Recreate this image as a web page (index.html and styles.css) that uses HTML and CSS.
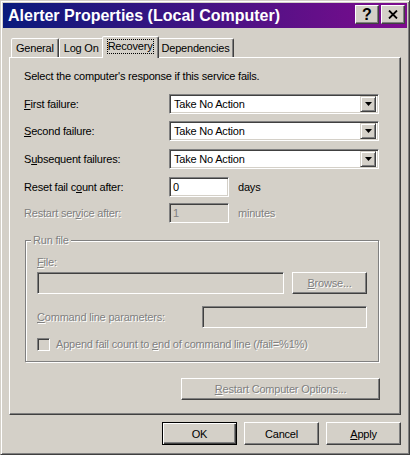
FILE: index.html
```html
<!DOCTYPE html>
<html lang="en">
<head>
  <meta charset="UTF-8">
  <title>Alerter Properties (Local Computer)</title>
  <link rel="stylesheet" href="styles.css">
</head>
<body>
  <div class="window">
    <div class="titlebar">
      <span class="title">Alerter Properties (Local Computer)</span>
      <div class="caption-buttons">
        <button class="cap-btn help">?</button>
        <button class="cap-btn close">
          <svg width="10" height="9" viewBox="0 0 10 9"><path d="M1 0.5 L9 8.5 M9 0.5 L1 8.5" stroke="#000" stroke-width="1.8" fill="none"/></svg>
        </button>
      </div>
    </div>

    <div class="body">
      <div class="tabs">
        <div class="tab">General</div>
        <div class="tab">Log On</div>
        <div class="tab active"><span class="focus">Recovery</span></div>
        <div class="tab">Dependencies</div>
      </div>

      <div class="panel">
        <div class="intro">Select the computer's response if this service fails.</div>

        <div class="row first">
          <label class="row-label"><u>F</u>irst failure:</label>
          <div class="combo"><span class="combo-text">Take No Action</span><span class="combo-arrow"><svg width="7" height="4" viewBox="0 0 7 4"><path d="M0 0 H7 L3.5 4 Z" fill="#000"/></svg></span></div>
        </div>
        <div class="row second">
          <label class="row-label"><u>S</u>econd failure:</label>
          <div class="combo"><span class="combo-text">Take No Action</span><span class="combo-arrow"><svg width="7" height="4" viewBox="0 0 7 4"><path d="M0 0 H7 L3.5 4 Z" fill="#000"/></svg></span></div>
        </div>
        <div class="row">
          <label class="row-label">S<u>u</u>bsequent failures:</label>
          <div class="combo"><span class="combo-text">Take No Action</span><span class="combo-arrow"><svg width="7" height="4" viewBox="0 0 7 4"><path d="M0 0 H7 L3.5 4 Z" fill="#000"/></svg></span></div>
        </div>
        <div class="row">
          <label class="row-label">Reset fail c<u>o</u>unt after:</label>
          <div class="textbox small">0</div>
          <span class="unit">days</span>
        </div>
        <div class="row last disabled">
          <label class="row-label">Restart ser<u>v</u>ice after:</label>
          <div class="textbox small off">1</div>
          <span class="unit">minutes</span>
        </div>

        <div class="group disabled">
          <span class="legend">Run file</span>
          <div class="field-label"><u>F</u>ile:</div>
          <div class="file-row">
            <div class="textbox file off"></div>
            <button class="btn browse"><u>B</u>rowse...</button>
          </div>
          <div class="cmd-row">
            <span><u>C</u>ommand line parameters:</span>
            <div class="textbox cmd off"></div>
          </div>
          <div class="check-row">
            <span class="checkbox"></span>
            <span>Append fail count to <u>e</u>nd of command line (/fail=%1%)</span>
          </div>
        </div>

        <button class="btn restart disabled"><u>R</u>estart Computer Options...</button>
      </div>

      <div class="actions">
        <button class="btn default">OK</button>
        <button class="btn">Cancel</button>
        <button class="btn"><u>A</u>pply</button>
      </div>
    </div>
  </div>
</body>
</html>
```

FILE: styles.css
```css
* {
  box-sizing: border-box;
}
body {
  margin: 0;
  background: #d4d0c8;
  font-family: "Liberation Sans", Arial, sans-serif;
  font-size: 11px;
  letter-spacing: -0.2px;
  color: #000;
}
u {
  text-decoration: underline;
  text-underline-offset: 1px;
}
.window {
  width: 410px;
  height: 455px;
  background: #d4d0c8;
  border: 1px solid;
  border-color: #d4d0c8 #404040 #404040 #d4d0c8;
  box-shadow: inset 1px 1px #fff, inset -1px -1px #808080;
  padding: 2px;
  display: flex;
  flex-direction: column;
}

/* title bar */
.titlebar {
  height: 25px;
  display: flex;
  align-items: flex-start;
  justify-content: space-between;
  padding: 0 2px 0 5px;
  background: linear-gradient(to right, #0a1a7c, #4a1284 55%, #7e0c8e);
}
.title {
  color: #fff;
  font-weight: bold;
  font-size: 16px;
  letter-spacing: 0;
  line-height: 25px;
}
.caption-buttons {
  display: flex;
  gap: 2px;
  margin-top: 2px;
}
.cap-btn {
  width: 24px;
  height: 19px;
  padding: 0;
  background: #d4d0c8;
  border: 1px solid;
  border-color: #fff #404040 #404040 #fff;
  box-shadow: inset -1px -1px #808080;
  display: flex;
  align-items: center;
  justify-content: center;
  font-family: "Liberation Sans", Arial, sans-serif;
  font-weight: bold;
  font-size: 16px;
  color: #000;
}

/* tabs */
.body {
  flex: 1;
  padding: 0 6px;
  display: flex;
  flex-direction: column;
}
.tabs {
  display: flex;
  align-items: flex-end;
  height: 21px;
  margin-top: 8px;
  padding-left: 2px;
}
.tab {
  height: 19px;
  padding: 0 4px;
  display: flex;
  align-items: center;
  border: 1px solid;
  border-bottom: none;
  border-color: #fff #404040 transparent #fff;
  box-shadow: inset -1px 0 #808080;
  border-radius: 2px 2px 0 0;
  background: #d4d0c8;
}
.tab.active {
  height: 22px;
  margin: 0 -2px -1px;
  padding: 0 5px 3px;
  position: relative;
  z-index: 1;
}
.focus {
  outline: 1px dotted #000;
  outline-offset: 0;
  line-height: 13px;
}

/* property page */
.panel {
  width: 392px;
  height: 358px;
  border: 1px solid;
  border-color: #fff #404040 #404040 #fff;
  box-shadow: inset -1px -1px #808080;
  padding: 11px 20px 0 14px;
  display: flex;
  flex-direction: column;
}
.intro {
  line-height: 14px;
}
.row {
  display: flex;
  align-items: center;
  height: 20px;
  margin-top: 8px;
}
.row.first {
  margin-top: 11px;
}
.row.second {
  margin-top: 7px;
}
.row.last {
  margin-top: 6px;
}
.row-label {
  width: 145px;
}
.disabled {
  color: #808080;
}
.disabled span, .disabled .row-label, .disabled .field-label, .btn.disabled {
  text-shadow: 1px 1px 0 #fff;
}

.combo, .textbox {
  height: 20px;
  border: 1px solid;
  border-color: #808080 #fff #fff #808080;
  box-shadow: inset 1px 1px #404040, inset -1px -1px #d4d0c8;
  background: #fff;
}
.combo {
  width: 210px;
  display: flex;
  align-items: center;
  padding: 2px;
}
.combo-text {
  flex: 1;
  padding-left: 2px;
}
.combo-arrow {
  width: 16px;
  height: 16px;
  background: #d4d0c8;
  border: 1px solid;
  border-color: #d4d0c8 #404040 #404040 #d4d0c8;
  box-shadow: inset 1px 1px #fff, inset -1px -1px #808080;
  display: flex;
  align-items: center;
  justify-content: center;
}
.textbox {
  display: flex;
  align-items: center;
  padding-left: 3px;
}
.textbox.small {
  width: 60px;
}
.textbox.off {
  background: #d4d0c8;
  color: #808080;
}
.unit {
  margin-left: 9px;
}

/* run file group */
.group {
  position: relative;
  margin: 17px 0 0 1px;
  width: 354px;
  height: 122px;
  border: 1px solid #808080;
  box-shadow: inset 1px 1px #fff, 1px 1px #fff;
  padding: 14px 11px 0 11px;
}
.legend {
  position: absolute;
  top: -8px;
  left: 5px;
  padding: 0 2px;
  line-height: 14px;
  background: #d4d0c8;
}
.field-label {
  line-height: 14px;
}
.file-row {
  display: flex;
  margin-top: 3px;
}
.textbox.file {
  width: 247px;
  height: 22px;
}
.browse {
  margin-left: 8px;
  width: 75px;
  height: 22px;
}
.cmd-row {
  display: flex;
  align-items: center;
  justify-content: space-between;
  margin-top: 12px;
}
.textbox.cmd {
  width: 165px;
  height: 22px;
}
.check-row {
  display: flex;
  align-items: center;
  margin-top: 9px;
  height: 14px;
}
.checkbox {
  width: 13px;
  height: 13px;
  margin-right: 6px;
  border: 1px solid;
  border-color: #808080 #fff #fff #808080;
  box-shadow: inset 1px 1px #404040, inset -1px -1px #d4d0c8;
  background: #d4d0c8;
}

/* buttons */
.btn {
  height: 22px;
  padding: 0;
  font-family: inherit;
  font-size: 11px;
  letter-spacing: -0.2px;
  color: #000;
  background: #d4d0c8;
  border: 1px solid;
  border-color: #fff #404040 #404040 #fff;
  box-shadow: inset -1px -1px #808080;
}
.btn.disabled, .browse {
  color: #808080;
}
.browse {
  text-shadow: 1px 1px 0 #fff;
}
.restart {
  align-self: flex-end;
  width: 199px;
  margin-top: 16px;
}
.actions {
  display: flex;
  justify-content: flex-end;
  gap: 7px;
  margin-top: 7px;
}
.actions .btn {
  width: 75px;
  height: 23px;
}
.btn.default {
  border: 1px solid #000;
  box-shadow: inset 1px 1px #fff, inset -1px -1px #404040, inset -2px -2px #808080;
}
```
